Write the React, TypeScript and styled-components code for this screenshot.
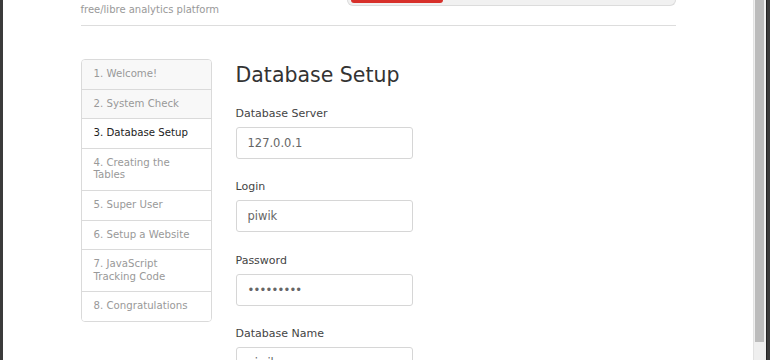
import React from 'react';
import styled, { createGlobalStyle } from 'styled-components';

const GlobalStyle = createGlobalStyle`
  html, body {
    margin: 0;
    padding: 0;
    height: 100%;
    overflow: hidden;
  }
  body {
    font-family: 'DejaVu Sans', Verdana, sans-serif;
    color: #333;
  }
`;

const Frame = styled.div`
  display: flex;
  width: 770px;
  height: 360px;
  background: #fff;
`;

const Edge = styled.div<{ $w: number }>`
  width: ${(p) => p.$w}px;
  flex-shrink: 0;
  background: #3b3b3b;
  border-left: ${(p) => (p.$w > 3 ? '1px solid #222' : 'none')};
  box-sizing: border-box;
`;

const Page = styled.div`
  flex: 1;
  overflow: hidden;
  background: #fff;
`;

const Scrollbar = styled.div`
  width: 13px;
  flex-shrink: 0;
  box-sizing: border-box;
  background: #efefef;
  border-left: 1px solid #e2e2e2;
  padding: 0 2px 0 1px;
`;

const Thumb = styled.div`
  height: 342px;
  background: #bcbcbc;
`;

const Container = styled.div`
  width: 595px;
  margin: 0 auto;
`;

const Header = styled.div`
  display: flex;
  justify-content: space-between;
  align-items: flex-start;
  height: 25px;
  border-bottom: 1px solid #ddd;
`;

const Tagline = styled.div`
  font-size: 10px;
  line-height: 12px;
  color: #999;
  padding-top: 4px;
`;

const ProgressTrack = styled.div`
  width: 329px;
  height: 6px;
  box-sizing: border-box;
  background: #f1f1f1;
  border: 1px solid #dcdcdc;
  border-top: none;
  border-radius: 0 0 7px 7px;
  padding: 0 3px;
`;

const ProgressFill = styled.div`
  height: 3px;
  background: #d7302a;
  border-radius: 0 0 4px 4px;
`;

const Body = styled.div`
  display: flex;
  align-items: flex-start;
  margin-top: 33px;
`;

const Steps = styled.ul`
  list-style: none;
  margin: 0;
  padding: 0;
  width: 131px;
  flex-shrink: 0;
  box-sizing: border-box;
  border: 1px solid #dadada;
  border-radius: 4px;
  overflow: hidden;
`;

const Step = styled.li<{ $state: 'done' | 'current' | 'todo' }>`
  padding: 8px 12px;
  font-size: 10.2px;
  line-height: 12.6px;
  background: ${(p) => (p.$state === 'done' ? '#f8f8f8' : '#fff')};
  color: ${(p) => (p.$state === 'current' ? '#222' : '#999')};
  & + & {
    border-top: 1px solid #dadada;
  }
`;

const Main = styled.div`
  margin-left: 24px;
  flex: 1;
`;

const Title = styled.h2`
  margin: 4px 0 19px;
  font-size: 20.5px;
  line-height: 24px;
  font-weight: normal;
  color: #333;
`;

const Field = styled.div`
  margin-bottom: 20.4px;
`;

const Label = styled.label`
  display: block;
  font-size: 11px;
  line-height: 16px;
  margin-bottom: 5px;
  color: #444;
`;

const Input = styled.input<{ $secret?: boolean }>`
  display: block;
  width: 177px;
  height: 32px;
  box-sizing: border-box;
  padding: 0 11px;
  border: 1px solid #d6d6d6;
  border-radius: 3px;
  font-family: 'DejaVu Sans', Verdana, sans-serif;
  font-size: 11.5px;
  letter-spacing: ${(p) => (p.$secret ? '-0.8px' : 'normal')};
  color: #666;
  background: #fff;
  outline: none;
`;

const steps: { label: string; state: 'done' | 'current' | 'todo' }[] = [
  { label: '1. Welcome!', state: 'done' },
  { label: '2. System Check', state: 'done' },
  { label: '3. Database Setup', state: 'current' },
  { label: '4. Creating the Tables', state: 'todo' },
  { label: '5. Super User', state: 'todo' },
  { label: '6. Setup a Website', state: 'todo' },
  { label: '7. JavaScript Tracking Code', state: 'todo' },
  { label: '8. Congratulations', state: 'todo' },
];

const fields = [
  { label: 'Database Server', value: '127.0.0.1', type: 'text' },
  { label: 'Login', value: 'piwik', type: 'text' },
  { label: 'Password', value: 'secretpwd', type: 'password' },
  { label: 'Database Name', value: 'piwik', type: 'text' },
];

const progress = 28.7;

const App = () => {
  return (
    <Frame>
      <GlobalStyle />
      <Edge $w={3} />
      <Page>
        <Container>
          <Header>
            <Tagline>free/libre analytics platform</Tagline>
            <ProgressTrack>
              <ProgressFill style={{ width: `${progress}%` }} />
            </ProgressTrack>
          </Header>
          <Body>
            <Steps>
              {steps.map((s) => (
                <Step key={s.label} $state={s.state}>
                  {s.label}
                </Step>
              ))}
            </Steps>
            <Main>
              <Title>Database Setup</Title>
              {fields.map((f) => (
                <Field key={f.label}>
                  <Label>{f.label}</Label>
                  <Input
                    type={f.type}
                    defaultValue={f.value}
                    $secret={f.type === 'password'}
                    readOnly
                  />
                </Field>
              ))}
            </Main>
          </Body>
        </Container>
      </Page>
      <Scrollbar>
        <Thumb />
      </Scrollbar>
      <Edge $w={4} />
    </Frame>
  );
};

export default App;
